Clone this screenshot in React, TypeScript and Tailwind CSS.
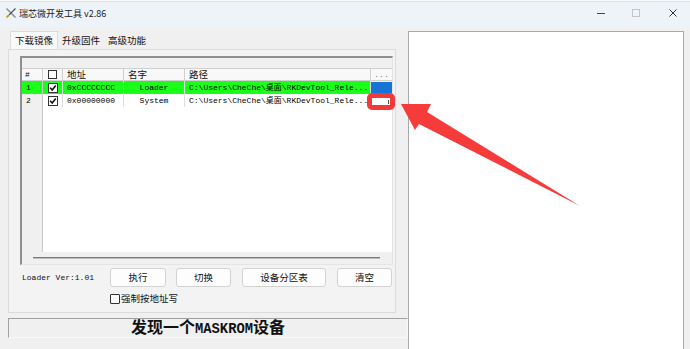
import React from "react";

function Check({ checked }: { checked: boolean }) {
  return (
    <div className="w-[10px] h-[10px] border border-[#333] bg-white flex items-center justify-center">
      {checked && (
        <svg width="8" height="8" viewBox="0 0 8 8">
          <path d="M1.2 3.8 L3.2 6 L6.8 1.6" stroke="#111" strokeWidth="1.6" fill="none" />
        </svg>
      )}
    </div>
  );
}

const mono = "font-['Liberation_Mono','Noto_Sans_CJK_SC',monospace] text-[8px]";

function Row({ idx, addr, name, green }: { idx: string; addr: string; name: string; green: boolean }) {
  const bg = green ? "bg-[#1aff1a]" : "bg-white";
  return (
    <div className={`grid grid-cols-[21px_20px_61px_61px_186px_21px] h-[13px] ${mono} text-black`}>
      <div className={`${green ? "bg-[#1aff1a]" : "bg-[#f0f0f0]"} border-r border-[#c8c8c8] flex items-center pl-[4px]`}>{idx}</div>
      <div className={`${bg} border-r border-[#dcdcdc] flex items-center justify-center`}>
        <Check checked />
      </div>
      <div className={`${bg} border-r border-[#dcdcdc] flex items-center pl-[4px] whitespace-nowrap`}>{addr}</div>
      <div className={`${bg} border-r border-[#dcdcdc] flex items-center justify-center whitespace-nowrap`}>{name}</div>
      <div className={`${bg} border-r border-[#dcdcdc] flex items-center pl-[4px] whitespace-nowrap overflow-hidden`}>
        C:\Users\CheChe\桌面\RKDevTool_Rele...
      </div>
      <div className={green ? "bg-[#1874d4] my-[1px]" : "bg-white"} />
    </div>
  );
}

function Btn({ label, w, ml }: { label: string; w: string; ml: string }) {
  return (
    <div className={`${w} ${ml} h-[19px] border border-[#d2d2d2] bg-[#fdfdfd] rounded-[3px] flex items-center justify-center text-[9.5px] text-[#111]`}>
      {label}
    </div>
  );
}

export default function App() {
  return (
    <div className="relative w-[690px] h-[349px] overflow-hidden bg-[#f0f0f0] font-['Noto_Sans_CJK_SC','Noto_Sans',sans-serif] text-black">
      {/* title bar */}
      <div className="h-[28px] bg-[#eef3fa] flex flex-col">
        <div className="h-[2px] bg-[#f8f9fb] border-b border-[#dde2ea]" />
        <div className="h-[22px] flex items-center">
          <svg className="ml-[5px]" width="12" height="12" viewBox="0 0 12 12">
            <path d="M1.5 1.5 L10.5 10.5" stroke="#8a8a8a" strokeWidth="1.4" />
            <path d="M10.5 1.5 L4 8" stroke="#555" strokeWidth="1.2" />
            <path d="M4 8 L1.5 10.5" stroke="#c9a23a" strokeWidth="2" />
          </svg>
          <span className="ml-[2px] text-[9px] text-[#222] leading-none">瑞芯微开发工具 v2.86</span>
          <div className="ml-auto mr-[13px] flex items-center">
            <div className="w-[8px] h-[1px] bg-[#444]" />
            <div className="ml-[27px] w-[8px] h-[8px] border border-[#c4c4c4]" />
            <svg className="ml-[29px]" width="8" height="8" viewBox="0 0 8 8">
              <path d="M0.5 0.5 L7.5 7.5 M7.5 0.5 L0.5 7.5" stroke="#333" strokeWidth="1" />
            </svg>
          </div>
        </div>
      </div>

      {/* body */}
      <div className="flex pt-[3px]">
        <div className="w-[408px] shrink-0 flex flex-col">
          {/* tabs */}
          <div className="h-[18px] flex pl-[10px] text-[9.5px] text-[#111]">
            <div className="px-[4px] flex items-center bg-[#f9f9f9] border border-b-0 border-[#dcdcdc]">下载镜像</div>
            <div className="px-[4px] flex items-center">升级固件</div>
            <div className="px-[4px] flex items-center">高级功能</div>
          </div>
          {/* tab page */}
          <div className="ml-[8px] w-[388px] h-[264px] border border-[#dcdcdc] bg-[#f3f3f3] pt-[6px] pl-[11px]">
            <div className="w-[373px] h-[209px] border-t-2 border-l-2 border-r border-b border-t-[#8f8f8f] border-l-[#8f8f8f] border-r-[#e4e4e4] border-b-[#e4e4e4] flex flex-col">
              <div className="h-[10px] bg-[#f0f0f0]" />
              <div className="grid grid-cols-[21px_20px_61px_61px_186px_21px] h-[13px] bg-[#f8f8f8] border-y border-[#d0d0d0] text-[9.5px] text-[#111] leading-none">
                <div className="border-r border-[#cfcfcf] flex items-center pl-[3px] font-['Liberation_Mono',monospace] text-[8px]">#</div>
                <div className="border-r border-[#cfcfcf] flex items-center justify-center">
                  <div className="w-[9px] h-[9px] border border-[#333] bg-white" />
                </div>
                <div className="border-r border-[#cfcfcf] flex items-center pl-[4px]">地址</div>
                <div className="border-r border-[#cfcfcf] flex items-center pl-[4px]">名字</div>
                <div className="border-r border-[#cfcfcf] flex items-center pl-[4px]">路径</div>
                <div className="flex items-center justify-center text-[#777] font-['Liberation_Mono',monospace] text-[8px]">...</div>
              </div>
              <Row idx="1" addr="0xCCCCCCCC" name="Loader" green />
              <Row idx="2" addr="0x00000000" name="System" green={false} />
              <div className="h-[145px] flex">
                <div className="w-[21px] bg-[#f0f0f0] border-r border-[#c8c8c8]" />
                <div className="flex-1 bg-white" />
              </div>
              <div className="h-[12px] bg-[#f0f0f0] pt-[5px] pl-[11px]">
                <div className="w-[347px] h-[2px] bg-[#7a7a7a] border-b border-[#bdbdbd]" />
              </div>
            </div>
            {/* controls */}
            <div className="mt-[3px] h-[19px] flex items-center">
              <div className={`w-[90px] pl-[2px] ${mono} text-[#111]`}>Loader Ver:1.01</div>
              <Btn label="执行" w="w-[56px]" ml="ml-0" />
              <Btn label="切换" w="w-[55px]" ml="ml-[10px]" />
              <Btn label="设备分区表" w="w-[84px]" ml="ml-[11px]" />
              <Btn label="清空" w="w-[55px]" ml="ml-[11px]" />
            </div>
            <div className="mt-[6px] pl-[90px] h-[12px] flex items-center">
              <div className="w-[10px] h-[10px] border border-[#333] bg-white rounded-[1px]" />
              <span className="ml-[1px] text-[9.5px] text-[#111] leading-none">强制按地址写</span>
            </div>
          </div>
          {/* status bar */}
          <div className="mt-[5px] ml-[8px] w-[400px] h-[20px] border-t border-l border-r border-b border-t-[#a0a0a0] border-l-[#a0a0a0] border-r-[#f8f8f8] border-b-[#f8f8f8] flex items-center justify-center font-bold text-[#111]">
            <div className="flex items-baseline leading-[20px]">
              <span className="text-[16px]">发现一个</span>
              <span className="text-[13.8px] font-['Liberation_Mono',monospace]">MASKROM</span>
              <span className="text-[16px]">设备</span>
            </div>
          </div>
        </div>
        <div className="w-[276px] h-[330px] shrink-0 bg-white border border-[#a9a9a9]" />
      </div>

      {/* annotation: red box */}
      <div className="absolute left-[367px] top-[93px] w-[28px] h-[17px] border-[5px] border-[#f23a3a] rounded-[5px] bg-white flex justify-end items-center">
        <div className="w-[1px] h-[4px] bg-[#555] mr-[1px]" />
      </div>
      {/* annotation: red arrow */}
      <svg className="absolute left-0 top-0 pointer-events-none" width="690" height="349" viewBox="0 0 690 349">
        <polygon points="401,104 431,104 427,112 580,206 419,124 415,130" fill="#f63b3b" />
      </svg>
    </div>
  );
}
